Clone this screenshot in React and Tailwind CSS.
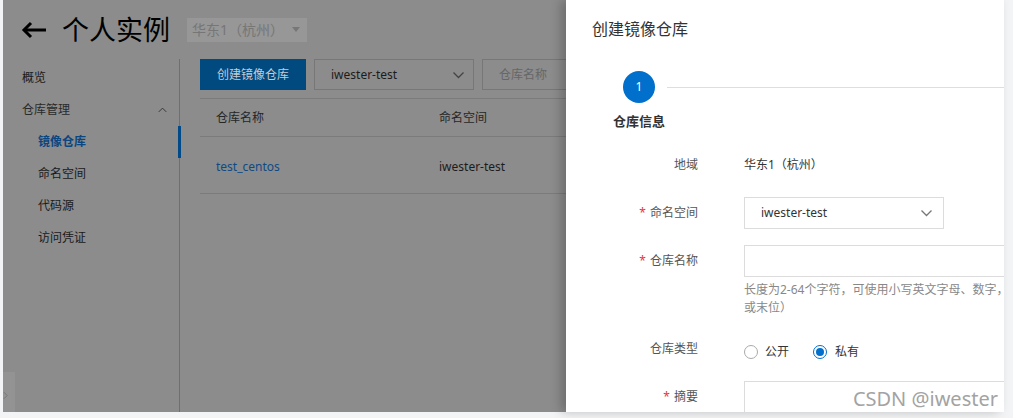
import React from 'react';

const menu = [
  { label: '镜像仓库', active: true },
  { label: '命名空间' },
  { label: '代码源' },
  { label: '访问凭证' },
];

const Chevron = ({ className, dir = 'down' }) => (
  <svg viewBox="0 0 12 8" className={className} fill="none" stroke="currentColor" strokeWidth="1.3">
    {dir === 'down' ? <polyline points="1,1.5 6,6.5 11,1.5" /> : <polyline points="1,6.5 6,1.5 11,6.5" />}
  </svg>
);

const FormRow = ({ label, required, children, className = '' }) => (
  <div className={`flex ${className}`}>
    <div className="w-[132px] h-[32px] flex items-center justify-end text-[12px] text-[#555] shrink-0">
      {required && <span className="text-[#e4393c] mr-[4px]">*</span>}
      {label}
    </div>
    <div className="ml-[46px] flex-1 min-w-0">{children}</div>
  </div>
);

export default function App() {
  return (
    <div className="relative w-[1013px] h-[418px] bg-[#f3f4f6] pl-[3px] pr-[9px] pb-[6px] flex overflow-hidden font-['Noto_Sans','Noto_Sans_CJK_SC',sans-serif]">
      {/* masked console page */}
      <div className="relative w-[563px] h-full bg-[#8c8c8c] flex flex-col shrink-0">
        <div className="h-[59px] flex items-center pl-[18px] shrink-0">
          <svg viewBox="0 0 26 18" className="w-[26px] h-[18px] text-black" fill="none" stroke="currentColor" strokeWidth="3">
            <line x1="3" y1="9" x2="25" y2="9" />
            <polyline points="10,2 3,9 10,16" />
          </svg>
          <span className="ml-[15px] text-[27px] leading-none text-black">个人实例</span>
          <div className="ml-[17px] h-[24px] w-[120px] bg-[#979797] flex items-center pl-[5px] pr-[7px] text-[14px] text-[#767676]">
            <span>华东1（杭州）</span>
            <span className="ml-auto w-0 h-0 border-l-[4px] border-r-[4px] border-t-[5px] border-l-transparent border-r-transparent border-t-[#777]" />
          </div>
        </div>
        <div className="flex flex-1 min-h-0">
          <div className="w-[177px] border-r border-[#6f6f6f] pt-[3px] text-[12px] text-[#1a1a1a] shrink-0">
            <div className="h-[32px] flex items-center pl-[19px]">概览</div>
            <div className="h-[32px] flex items-center pl-[19px] pr-[12px] text-[#2a2a2a]">
              仓库管理
              <Chevron dir="up" className="ml-auto w-[9px] h-[6px] text-[#333]" />
            </div>
            {menu.map((m) => (
              <div
                key={m.label}
                className={`relative h-[32px] flex items-center pl-[35px] ${m.active ? 'text-[#0b4680] font-bold' : ''}`}
              >
                {m.label}
                {m.active && <span className="absolute right-[-2px] top-0 h-full w-[3px] bg-[#004a8a]" />}
              </div>
            ))}
          </div>
          <div className="flex-1 min-w-0 pl-[20px] text-[12px]">
            <div className="flex gap-[8px] h-[31px]">
              <div className="w-[106px] bg-[#004a80] text-[#c3ccd5] flex items-center justify-center">创建镜像仓库</div>
              <div className="w-[160px] border border-[#777] flex items-center pl-[16px] pr-[8px] text-[#1c1c1c]">
                iwester-test
                <Chevron className="ml-auto w-[13px] h-[8px] text-[#444]" />
              </div>
              <div className="flex-1 border border-[#777] border-r-0 flex items-center pl-[16px] text-[#666]">仓库名称</div>
            </div>
            <div className="mt-[8px] border-t border-[#7b7b7b]">
              <div className="flex h-[38px] items-center pt-[1px] border-b border-[#7b7b7b] text-[#262626]">
                <div className="w-[223px] pl-[16px]">仓库名称</div>
                <div className="pl-[16px]">命名空间</div>
              </div>
              <div className="flex h-[57px] items-center pt-[3px] border-b border-[#7b7b7b]">
                <div className="w-[223px] pl-[16px] text-[#0e4a85]">test_centos</div>
                <div className="pl-[16px] text-[#1c1c1c]">iwester-test</div>
              </div>
            </div>
          </div>
        </div>
        <div className="absolute left-0 bottom-0 w-[12px] h-[40px] bg-[#939393] flex items-end pb-[12px]">
          <svg viewBox="0 0 6 10" className="w-[5px] h-[9px] text-[#777]" fill="none" stroke="currentColor" strokeWidth="1.2">
            <polyline points="1,1 5,5 1,9" />
          </svg>
        </div>
      </div>

      {/* drawer */}
      <div className="relative w-[438px] h-full bg-white overflow-hidden shrink-0 shadow-[-5px_0_10px_rgba(0,0,0,0.22)]">
        <div className="w-[620px]">
          <div className="h-[58px] flex items-center pl-[26px] text-[16px] text-[#333]">创建镜像仓库</div>
          <div className="mt-[13px] flex pl-[45px]">
            <div className="w-[56px] flex flex-col items-center shrink-0">
              <div className="w-[32px] h-[32px] rounded-full bg-[#0070cc] text-white text-[12px] flex items-center justify-center">1</div>
              <div className="mt-[9px] text-[13px] font-bold text-[#333] leading-[18px]">仓库信息</div>
            </div>
            <div className="flex-1 h-px bg-[#dedede] mt-[16px]" />
          </div>

          <div className="mt-[19px]">
            <FormRow label="地域">
              <div className="h-[32px] flex items-center text-[12px] text-[#333]">华东1（杭州）</div>
            </FormRow>
            <FormRow label="命名空间" required className="mt-[16px]">
              <div className="w-[200px] h-[32px] border border-[#dcdcdc] flex items-center pl-[16px] pr-[10px] text-[12px] text-[#333]">
                iwester-test
                <Chevron className="ml-auto w-[13px] h-[8px] text-[#777]" />
              </div>
            </FormRow>
            <FormRow label="仓库名称" required className="mt-[16px]">
              <div className="w-[400px] h-[32px] border border-[#dcdcdc]" />
              <div className="mt-[4px] text-[12px] leading-[18px] text-[#888]">
                <div className="whitespace-nowrap">长度为2-64个字符，可使用小写英文字母、数字，可使用分隔符“_”、“-”、“.”（分隔符不能在首位</div>
                <div>或末位）</div>
              </div>
            </FormRow>
            <FormRow label="仓库类型" className="mt-[16px]">
              <div className="h-[32px] pt-[5px] flex items-center text-[12px] text-[#333]">
                <span className="w-[14px] h-[14px] rounded-full border border-[#aaa] bg-white" />
                <span className="ml-[7px]">公开</span>
                <span className="ml-[24px] w-[14px] h-[14px] rounded-full border border-[#0070cc] flex items-center justify-center">
                  <span className="w-[8px] h-[8px] rounded-full bg-[#0070cc]" />
                </span>
                <span className="ml-[8px]">私有</span>
              </div>
            </FormRow>
            <FormRow label="摘要" required className="mt-[16px]">
              <div className="w-[400px] h-[60px] border border-[#dcdcdc]" />
            </FormRow>
          </div>
        </div>
      </div>

      <div className="absolute right-[15px] top-[385px] h-[28px] leading-[28px] text-[20px] text-[#a3a3a3] pointer-events-none">
        CSDN @iwester
      </div>
    </div>
  );
}
